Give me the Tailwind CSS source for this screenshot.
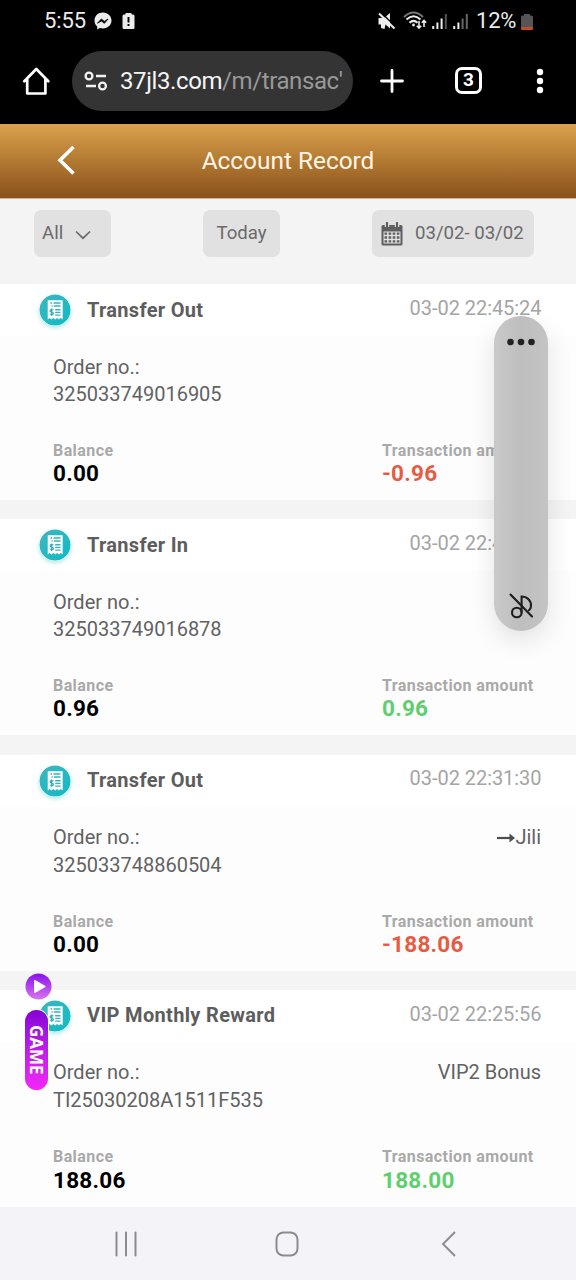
<!DOCTYPE html>
<html lang="en">
<head>
<meta charset="utf-8">
<title>Account Record</title>
<script src="https://cdn.jsdelivr.net/npm/@tailwindcss/browser@4"></script>
</head>
<body class="font-['Roboto',sans-serif] bg-[#f4f4f4] w-[576px] h-[1280px] overflow-hidden relative flex flex-col">
<svg class="absolute w-0 h-0">
  <defs>
    <linearGradient id="teal" x1="0" y1="0" x2="1" y2="1"><stop offset="0" stop-color="#3fb5bd"/><stop offset="1" stop-color="#0bbcc6"/></linearGradient>
    <symbol id="receipt" viewBox="0 0 32 32">
      <circle cx="16" cy="16" r="15.500" fill="url(#teal)"/>
      <path d="M8.700 6.200h15v19.300l-1.900-1.500-1.900 1.500-1.800-1.500-1.900 1.500-1.900-1.500-1.900 1.500-1.800-1.500-1.900 1.500z" fill="#fff"/>
      <path d="M11.500 9h1.500M14.500 9h7M12.500 12h1.200M14.800 12h6.700M16.200 15.700h5.300M16.200 18.400h5.300M16.200 21.100h5.300" stroke="#35b4bc" stroke-width="1.400"/>
      <path d="M14.300 16.200c-.6-.9-3.200-.9-3.200.7 0 1.600 3.300.8 3.300 2.500 0 1.600-2.700 1.600-3.400.4M12.700 14.500v7.400" fill="none" stroke="#27aeb7" stroke-width="1.200"/>
    </symbol>
  </defs>
</svg>

<!-- status bar -->
<header class="bg-black h-[124px] shrink-0 flex flex-col text-white">
  <div class="h-[42px] flex items-center pl-[44px] pr-[43px] justify-between text-[#ececec]">
    <div class="flex items-center">
      <span class="text-[22px] leading-[42px] w-[50px] tracking-[-0.1px] whitespace-nowrap">5:55</span>
      <svg class="w-[18px] h-[18px]" viewBox="0 0 18 18"><path d="M9 .5C4 .5.500 4 .500 8.600c0 2.600 1 4.600 2.700 6v2.900l2.700-1.400c1 .3 2 .4 3.100.4 5 0 8.500-3.500 8.500-7.900S14 .5 9 .5z" fill="#ececec"/><path d="M3.500 11.200 7.400 7l2.900 2.400L14 7l-3.600 4.300-3-2.300z" fill="#000" stroke="#000" stroke-width=".8"/></svg>
      <svg class="w-[13px] h-[18px] ml-[10px]" viewBox="0 0 13 18"><path d="M3.500 1h6v1.500H11a1.500 1.500 0 0 1 1.500 1.500v11.500A1.500 1.500 0 0 1 11 17H2a1.500 1.500 0 0 1-1.500-1.500V4A1.500 1.500 0 0 1 2 2.500h1.500z" fill="#ececec"/><path d="M6.500 5v5.500M6.500 12v2" stroke="#000" stroke-width="1.900"/></svg>
    </div>
    <div class="flex items-center">
      <svg class="w-[18px] h-[18px]" viewBox="0 0 18 18"><path d="M.5 6H6l6-5v15.500L7.500 12.500l-1 4.500L3 16v-3.500H.5z" fill="#ececec"/><path d="M2.500 0 18 15" stroke="#000" stroke-width="1.300"/><path d="M1 1.500 16.500 16.500" stroke="#ececec" stroke-width="2.100"/></svg>
      <svg class="w-[24px] h-[20px] ml-[7px]" viewBox="0 0 24 20" fill="none" stroke-width="2"><path d="M1 6Q10.500-3 20 6" stroke="#777"/><path d="M3.500 8.500q7-6.500 14 0M6.500 11.700q4-3.600 8 0" stroke="#ececec"/><circle cx="10.500" cy="14" r="1.400" fill="#ececec" stroke="none"/><path d="M16 10v7m-2.200-2.300L16 17l2.200-2.300M21 16V9.500m-2.200 2.300L21 9.500l2.200 2.300" stroke="#ececec" stroke-width="1.600"/></svg>
      <svg class="w-[15px] h-[17px] ml-[5px]" viewBox="0 0 15 17" stroke-width="2"><path d="M1.200 13v3M5.400 9.500V16M9.600 5.500V16" stroke="#ececec"/><path d="M13.800 1v15" stroke="#555"/></svg>
      <svg class="w-[15px] h-[17px] ml-[6px]" viewBox="0 0 15 17" stroke-width="2"><path d="M1.200 13v3M5.400 9.500V16" stroke="#ececec"/><path d="M9.600 5.500V16M13.800 1v15" stroke="#666"/></svg>
      <span class="text-[22px] leading-[42px] w-[43px] ml-[8px] tracking-[-0.200px] whitespace-nowrap">12%</span>
      <svg class="w-[12px] h-[17px] ml-[2px]" viewBox="0 0 12 17"><path d="M3 1h6v1.500h1.500Q12 2.500 12 4v11.500Q12 17 10.500 17h-9Q0 17 0 15.500V4q0-1.500 1.500-1.500H3z" fill="#555"/><path d="M0 14h12v1.500Q12 17 10.500 17h-9Q0 17 0 15.500z" fill="#c9482c"/></svg>
    </div>
  </div>
  <!-- browser toolbar -->
  <div class="h-[77px] flex items-center pl-[22px]">
    <svg class="w-[28px] h-[28px]" viewBox="0 0 28 28" fill="none" stroke="#fff" stroke-width="2.700" stroke-linejoin="round" stroke-linecap="round"><path d="M2.300 14.300 14.300 2 26.300 14.300M5.200 12v14.500h18.200V12"/></svg>
    <div class="w-[281px] h-[60px] rounded-full bg-[#343434] ml-[22px] flex items-center pl-[12px]">
      <svg class="w-[24px] h-[20px]" viewBox="0 0 24 20" fill="none" stroke="#f2f2f2" stroke-width="2.300"><circle cx="5" cy="5" r="3.400"/><path d="M12 5h10M2 15h10"/><circle cx="18.500" cy="15" r="3.400"/></svg>
      <div class="ml-[12px] w-[222px] overflow-hidden whitespace-nowrap text-[24px] tracking-[-0.400px] leading-[36px] text-[#f5f5f5]">37jl3.com<span class="text-[#999]">/m/transac'</span></div>
    </div>
    <svg class="w-[26px] h-[26px] ml-[26px]" viewBox="0 0 26 26" stroke="#fff" stroke-width="2.800" stroke-linecap="round"><path d="M13 2.500v21M2.500 13h21"/></svg>
    <div class="w-[27px] h-[27px] ml-[50px] rounded-[7px] border-[3px] border-white flex items-center justify-center font-bold text-[19px]">3</div>
    <svg class="w-[8px] h-[26px] ml-[54px]" viewBox="0 0 8 26" fill="#fff"><circle cx="4" cy="4" r="3.200"/><circle cx="4" cy="13" r="3.200"/><circle cx="4" cy="22" r="3.200"/></svg>
  </div>
</header>

<!-- page title -->
<div class="h-[75px] shrink-0 bg-linear-to-b from-[#dba24c] to-[#8a521a] border-b border-b-[#d8b58a] grid grid-cols-[100px_1fr_100px] items-center">
  <svg class="w-[20px] h-[30px] ml-[57px] -mt-[2px]" viewBox="0 0 20 30" fill="none" stroke="#fff" stroke-width="3.600"><path d="M16.500 2 3 15.300 16.500 28.500"/></svg>
  <h1 class="text-center text-[24.400px] leading-[30px] text-[#fff6e6]">Account Record</h1>
</div>

<!-- filters -->
<div class="h-[85px] shrink-0 pt-[11px] pl-[34px] pr-[42px] flex justify-between items-start text-[#6a6a6a] text-[18.600px] leading-[46px]">
  <div class="w-[77px] h-[47px] rounded-[7px] bg-[#e1e1e1] flex items-center pl-[8px]"><span class="w-[33px] -mt-[1px]">All</span><svg class="w-[16px] h-[10px] mt-[2px]" viewBox="0 0 16 10" fill="none" stroke="#6a6a6a" stroke-width="1.700"><path d="M1 1.500 8 8.200 15 1.500"/></svg></div>
  <div class="w-[77px] h-[47px] rounded-[7px] bg-[#e1e1e1] text-center">Today</div>
  <div class="w-[162px] h-[47px] rounded-[7px] bg-[#e1e1e1] flex items-center pl-[9px]">
    <svg class="w-[22px] h-[24px]" viewBox="0 0 22 24"><path d="M2 3h18q1.500 0 1.500 1.500v17.500q0 1.500-1.500 1.500H2Q.5 23.500.5 22V4.500Q.5 3 2 3z" fill="#5e5e5e"/><path d="M2.500 9.500h17v12h-17z" fill="#e1e1e1"/><path d="M6 .5v4.500M16 .5v4.500" stroke="#e1e1e1" stroke-width="4.500"/><path d="M6 1v4M16 1v4" stroke="#5e5e5e" stroke-width="2.200" stroke-linecap="round"/><path d="M3.500 11.700h15M3.500 15.500h15M3.500 19.300h15" stroke="#5e5e5e" stroke-width="2.300" stroke-dasharray="2.600 1.500"/></svg>
    <span class="ml-[12px] whitespace-nowrap -mt-[1px]">03/02- 03/02</span>
  </div>
</div>

<!-- records -->
<main class="h-[923px] shrink-0 flex flex-col gap-[19.300px] text-[20px] text-[#626262]">
  <article class="h-[216px] shrink-0 bg-[#fdfdfd] flex flex-col">
    <div class="h-[52px] bg-white flex pl-[39px] pr-[34.500px]">
      <svg class="w-[32px] h-[32px] mt-[10px] rounded-full shadow-[0_2px_4px_#b5e8ea]"><use href="#receipt"/></svg>
      <h2 class="ml-[16px] mt-[11.500px] leading-[28px] font-bold tracking-[0.300px] text-[#5d5d5d]">Transfer Out</h2>
      <time class="ml-auto mt-[9.500px] leading-[28px] tracking-[-0.050px] text-[#a5a5a5]">03-02 22:45:24</time>
    </div>
    <div class="h-[105px] pt-[17.500px] pl-[53px] pr-[35px] flex justify-between leading-[27.600px]"><p>Order no.:<br>325033749016905</p></div>
    <div class="pl-[53px] grid grid-cols-[329px_1fr] font-bold text-[16px] tracking-[0.420px] leading-[20px] text-[#a9a9a9]">
      <div>Balance<p class="text-[22.500px] tracking-[0.250px] leading-[26px] -mt-[0.800px] text-black">0.00</p></div>
      <div>Transaction amount<p class="text-[22.500px] tracking-[0.250px] leading-[26px] -mt-[0.800px] text-[#e85a42]">-0.96</p></div>
    </div>
  </article>
  <article class="h-[216px] shrink-0 bg-[#fdfdfd] flex flex-col">
    <div class="h-[52px] bg-white flex pl-[39px] pr-[34.500px]">
      <svg class="w-[32px] h-[32px] mt-[10px] rounded-full shadow-[0_2px_4px_#b5e8ea]"><use href="#receipt"/></svg>
      <h2 class="ml-[16px] mt-[11.500px] leading-[28px] font-bold tracking-[0.300px] text-[#5d5d5d]">Transfer In</h2>
      <time class="ml-auto mt-[9.500px] leading-[28px] tracking-[-0.050px] text-[#a5a5a5]">03-02 22:43:52</time>
    </div>
    <div class="h-[105px] pt-[17.500px] pl-[53px] pr-[35px] flex justify-between leading-[27.600px]"><p>Order no.:<br>325033749016878</p></div>
    <div class="pl-[53px] grid grid-cols-[329px_1fr] font-bold text-[16px] tracking-[0.420px] leading-[20px] text-[#a9a9a9]">
      <div>Balance<p class="text-[22.500px] tracking-[0.250px] leading-[26px] -mt-[1px] text-black">0.96</p></div>
      <div>Transaction amount<p class="text-[22.500px] tracking-[0.250px] leading-[26px] -mt-[1px] text-[#5fcf6e]">0.96</p></div>
    </div>
  </article>
  <article class="h-[216px] shrink-0 bg-[#fdfdfd] flex flex-col">
    <div class="h-[52px] bg-white flex pl-[39px] pr-[34.500px]">
      <svg class="w-[32px] h-[32px] mt-[10px] rounded-full shadow-[0_2px_4px_#b5e8ea]"><use href="#receipt"/></svg>
      <h2 class="ml-[16px] mt-[11.500px] leading-[28px] font-bold tracking-[0.300px] text-[#5d5d5d]">Transfer Out</h2>
      <time class="ml-auto mt-[9.500px] leading-[28px] tracking-[-0.050px] text-[#a5a5a5]">03-02 22:31:30</time>
    </div>
    <div class="h-[105px] pt-[17.500px] pl-[53px] pr-[35px] flex justify-between leading-[27.600px]"><p>Order no.:<br>325033748860504</p>
      <p class="flex items-center h-[28px]"><svg class="w-[18px] h-[10px]" viewBox="0 0 18 10"><path d="M0 5h14" stroke="#4d4d4d" stroke-width="2.200"/><path d="M12.500.6 18 5l-5.500 4.400z" fill="#4d4d4d"/></svg>Jili</p></div>
    <div class="pl-[53px] grid grid-cols-[329px_1fr] font-bold text-[16px] tracking-[0.420px] leading-[20px] text-[#a9a9a9]">
      <div>Balance<p class="text-[22.500px] tracking-[0.250px] leading-[26px] -mt-[0.600px] text-black">0.00</p></div>
      <div>Transaction amount<p class="text-[22.500px] tracking-[0.250px] leading-[26px] -mt-[0.600px] text-[#e85a42]">-188.06</p></div>
    </div>
  </article>
  <article class="h-[217px] shrink-0 bg-[#fdfdfd] flex flex-col">
    <div class="h-[52px] bg-white flex pl-[39px] pr-[34.500px]">
      <svg class="w-[32px] h-[32px] mt-[10px] rounded-full shadow-[0_2px_4px_#b5e8ea]"><use href="#receipt"/></svg>
      <h2 class="ml-[16px] mt-[11.500px] leading-[28px] font-bold tracking-[0.330px] text-[#5d5d5d]">VIP Monthly Reward</h2>
      <time class="ml-auto mt-[10px] leading-[28px] tracking-[-0.050px] text-[#a5a5a5]">03-02 22:25:56</time>
    </div>
    <div class="h-[105px] pt-[17.500px] pl-[53px] pr-[35px] flex justify-between leading-[27.600px]"><p>Order no.:<br>TI25030208A1511F535</p><p>VIP2 Bonus</p></div>
    <div class="pl-[53px] grid grid-cols-[329px_1fr] font-bold text-[16px] tracking-[0.420px] leading-[20px] text-[#a9a9a9]">
      <div>Balance<p class="text-[22.500px] tracking-[0.250px] leading-[26px] text-black">188.06</p></div>
      <div>Transaction amount<p class="text-[22.500px] tracking-[0.250px] leading-[26px] text-[#5fcf6e]">188.00</p></div>
    </div>
  </article>
</main>

<!-- system navigation -->
<nav class="h-[73px] shrink-0 bg-[#f4f3f8] flex items-center justify-between pl-[114px] pr-[119px]">
  <svg class="w-[24px] h-[26px]" viewBox="0 0 24 26" stroke="#8b8b90" stroke-width="2" stroke-linecap="round"><path d="M2.500 1.500v23M12 1.500v23M21.500 1.500v23"/></svg>
  <svg class="w-[26px] h-[26px] -ml-[6px]" viewBox="0 0 26 26" fill="none" stroke="#8b8b90" stroke-width="2"><rect x="2.500" y="1.500" width="21" height="23" rx="7"/></svg>
  <svg class="w-[16px] h-[26px]" viewBox="0 0 16 26" fill="none" stroke="#8b8b90" stroke-width="1.900"><path d="M14 1 2 13l12 12"/></svg>
</nav>

<!-- floating game button -->
<div class="absolute left-[25px] top-[973px] w-[27px] flex flex-col">
  <svg class="w-[27px] h-[27px]" viewBox="0 0 27 27"><defs><linearGradient id="pg" x1="0" y1="0" x2="0" y2="1"><stop offset="0" stop-color="#8a10ec"/><stop offset="1" stop-color="#d676ee"/></linearGradient></defs><circle cx="13.500" cy="13.500" r="13" fill="url(#pg)"/><path d="M10 8v11l9.500-5.500z" fill="#fff" stroke="#fff" stroke-width="2" stroke-linejoin="round"/></svg>
  <div class="mt-[10px] w-[23px] h-[80px] rounded-full bg-linear-to-b from-[#8600d6] to-[#f525f8] ring-1 ring-white flex items-center justify-center text-white font-bold text-[17px] leading-[23px] [writing-mode:vertical-rl] font-['Noto_Sans',sans-serif]">GAME</div>
</div>

<!-- floating recorder panel -->
<div class="absolute left-[494px] top-[316px] w-[54px] h-[315px] rounded-full bg-linear-to-r from-[#c9c9c9] via-[#bebebe] to-[#c4c4c4] shadow-[0_10px_26px_rgba(0,0,0,0.11)] flex flex-col items-center justify-between pt-[22px] pb-[12px]">
  <svg class="w-[28px] h-[8px]" viewBox="0 0 28 8" fill="#222"><circle cx="3.500" cy="4" r="3.300"/><circle cx="14" cy="4" r="3.300"/><circle cx="24.500" cy="4" r="3.300"/></svg>
  <svg class="w-[26px] h-[26px]" viewBox="0 0 26 26" fill="none" stroke="#1e1e1e" stroke-width="2.100" stroke-linecap="round"><path d="M2.500 1.500 24 23.500"/><circle cx="8.800" cy="19.500" r="4.800"/><path d="M13.600 19.500V3.500c5.500 0 9.800 4 9.400 9.500-.1 2-1 3.500-2 4.300"/></svg>
</div>
</body>
</html>
